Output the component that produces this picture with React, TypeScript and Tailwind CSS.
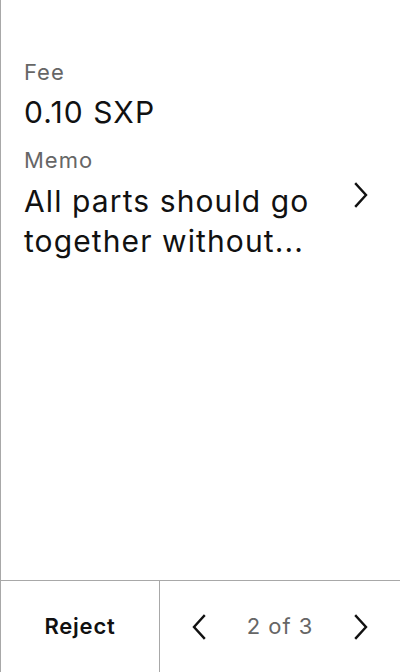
function Chevron({ dir }: { dir: "left" | "right" }) {
    return (
        <svg width="14" height="26" viewBox="0 0 14 26" fill="none" stroke="#111" strokeWidth="2.4" strokeLinecap="square">
            {dir === "right" ? <path d="M2 2 L12 13 L2 24" /> : <path d="M12 2 L2 13 L12 24" />}
        </svg>
    )
}

export default function App() {
    return (
        <div className="w-[400px] h-[672px] bg-white border-l border-[#a8a8a8] flex flex-col font-['Inter',sans-serif] text-[#111]">
            <div className="flex-1 pt-[58px] pl-[23px] pr-[32px]">
                <div className="text-[22px] text-[#666] leading-[28px] tracking-[1px]">Fee</div>
                <div className="text-[30px] leading-[40px] tracking-[1.1px] mt-[6px]">0.10 SXP</div>
                <div className="text-[22px] text-[#666] leading-[28px] tracking-[1px] mt-[14px]">Memo</div>
                <div className="flex items-start justify-between mt-[7px]">
                    <div className="text-[30px] leading-[40px] tracking-[1.1px] w-[310px]">All parts should go together without...</div>
                    <div className="pt-[1px]">
                        <Chevron dir="right" />
                    </div>
                </div>
            </div>
            <div className="h-[92px] border-t border-[#a8a8a8] flex">
                <div className="w-[159px] border-r border-[#a8a8a8] flex items-center justify-center text-[22px] font-semibold tracking-[0.8px]">
                    Reject
                </div>
                <div className="flex-1 flex items-center justify-between pl-[32px] pr-[32px]">
                    <Chevron dir="left" />
                    <span className="text-[22px] text-[#666] tracking-[1px]">2 of 3</span>
                    <Chevron dir="right" />
                </div>
            </div>
        </div>
    )
}
